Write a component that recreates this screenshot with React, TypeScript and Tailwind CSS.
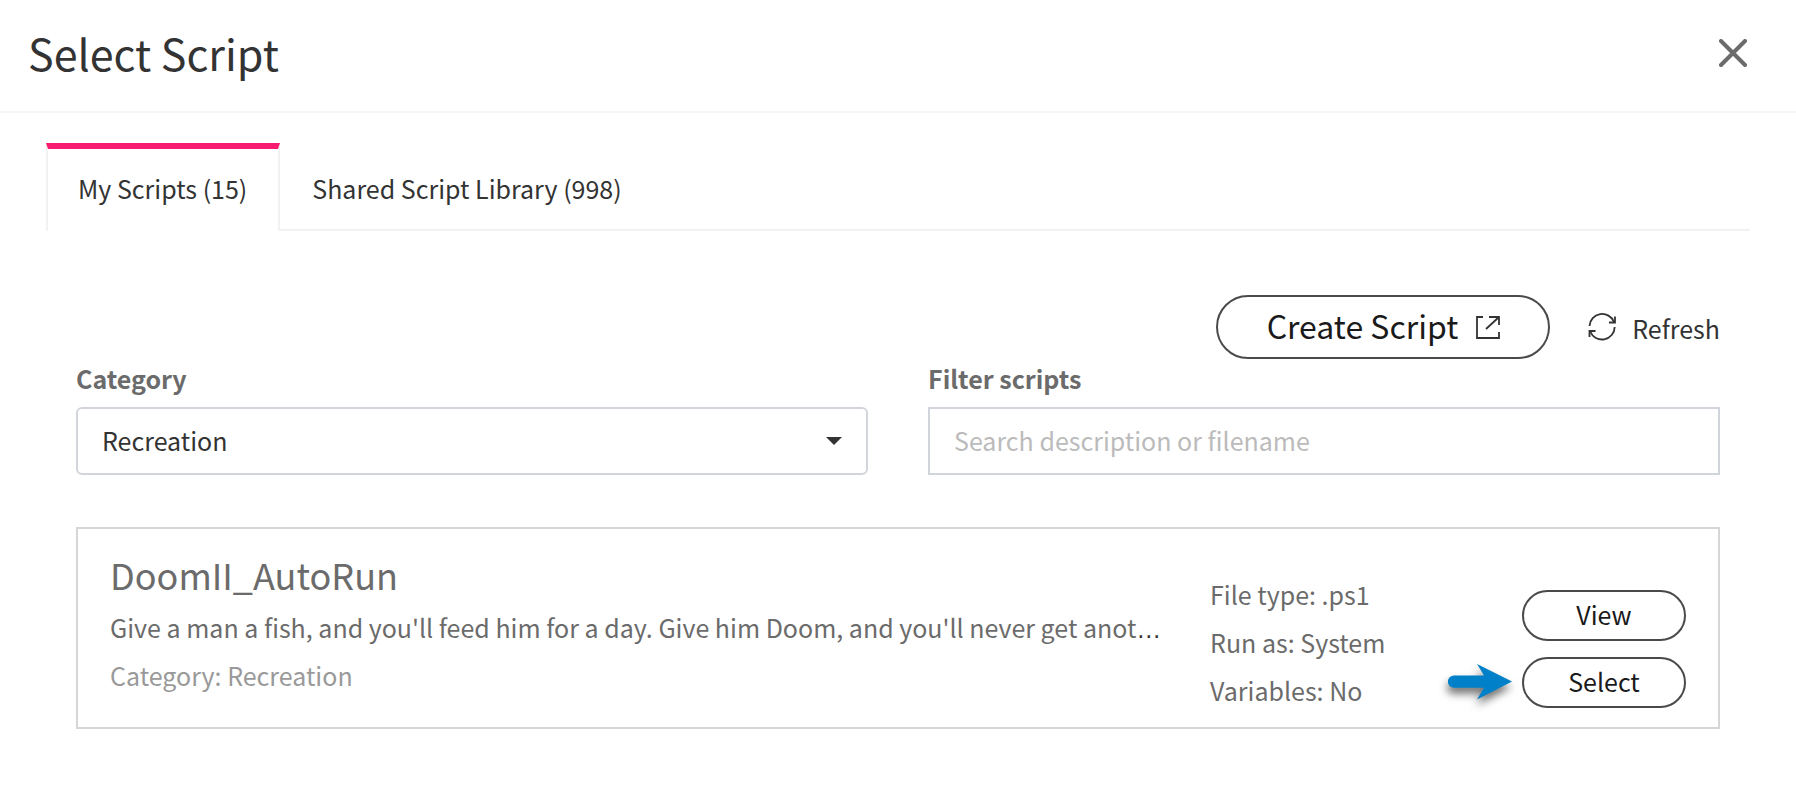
import React, { useState } from 'react';

type Script = {
  id: string;
  name: string;
  summary: string;
  category: string;
  fileType: string;
  runAs: string;
  variables: string;
};

type TabId = 'mine' | 'shared';

const tabs: { id: TabId; label: string }[] = [
  { id: 'mine', label: 'My Scripts (15)' },
  { id: 'shared', label: 'Shared Script Library (998)' }
];

// summary is already shortened, the card adds the ellipsis
const scripts: Script[] = [
  {
    id: 'doom2',
    name: 'DoomII_AutoRun',
    summary: "Give a man a fish, and you'll feed him for a day. Give him Doom, and you'll never get anot",
    category: 'Recreation',
    fileType: '.ps1',
    runAs: 'System',
    variables: 'No'
  }
];

function CloseIcon() {
  return (
    <svg width="28" height="28" viewBox="0 0 28 28" fill="none" stroke="#6b6b6b" strokeWidth="4" strokeLinecap="round">
      <path d="M2 2L26 26M26 2L2 26" />
    </svg>
  );
}

function ExternalIcon() {
  return (
    <svg width="24" height="24" viewBox="0 0 24 24" fill="none" stroke="#333333" strokeWidth="1.8">
      <path d="M7 2H1V23H23V17" />
      <path d="M13 2H23V10M23 2L10 14" />
    </svg>
  );
}

function RefreshIcon() {
  return (
    <svg width="28" height="28" viewBox="0 0 28 28" fill="none" stroke="#333333" strokeWidth="1.8">
      <path d="M1.500 13A12.700 12.700 0 0 1 26 9" />
      <path d="M27 3.500V9.500H21" />
      <path d="M26.700 14A12.700 12.700 0 0 1 2.200 18.500" />
      <path d="M1.500 24V18H7.500" />
    </svg>
  );
}

// Blue pointer next to the Select button
function PointerArrow() {
  return (
    <svg
      className="absolute right-full top-1/2 mr-0.5 -translate-y-1/2 pointer-events-none drop-shadow-[-1px_6px_4px_rgba(0,0,0,0.55)]"
      width="72"
      height="44"
      viewBox="0 0 72 44"
      aria-hidden="true"
    >
      <path d="M6 14.500H36L29 3L64 20.500L29 38.500L36 26.700H6A6 6 0 0 1 6 14.500Z" fill="#0080c8" />
    </svg>
  );
}

function ScriptCard({ script }: { script: Script }) {
  return (
    <article className="flex items-start border-2 border-[#d6d6d6] px-8 pb-[13px]">
      <div className="min-w-0 flex-1 pt-[22px]">
        <h2 className="mb-1.5 text-[36px] leading-[46px] text-[#6b6b6b]">{script.name}</h2>
        <p className="whitespace-nowrap leading-[48px] text-[#6b6b6b]">
          {script.summary}
          <span className="font-['Liberation_Sans',sans-serif] leading-none text-[#333333]">…</span>
        </p>
        <p className="leading-[48px] text-[#999999]">Category: {script.category}</p>
      </div>
      <div className="ml-[42px] w-[312px] shrink-0 pt-[41px] leading-[48px] text-[#6b6b6b]">
        <p>File type: {script.fileType}</p>
        <p>Run as: {script.runAs}</p>
        <p>Variables: {script.variables}</p>
      </div>
      <div className="flex w-[164px] shrink-0 flex-col gap-4 pt-[61px] text-[#1a1a1a]">
        <button className="h-[51px] rounded-full border-2 border-[#4a4a4a] pb-0.5">View</button>
        <div className="relative">
          <PointerArrow />
          <button className="h-[51px] w-full rounded-full border-2 border-[#4a4a4a] pb-0.5">Select</button>
        </div>
      </div>
    </article>
  );
}

export default function App() {
  const [tab, setTab] = useState<TabId>('mine');
  const [category, setCategory] = useState('Recreation');
  const [filter, setFilter] = useState('');

  const visible = scripts.filter(s => (s.name + s.summary).toLowerCase().includes(filter.toLowerCase()));

  return (
    <div className="min-h-screen bg-white font-['Noto_Sans_CJK_SC',sans-serif] text-[25px] text-[#333333]">
      <header className="flex items-center justify-between border-b-2 border-[#f4f4f4] pt-[21px] pr-[49px] pb-[27px] pl-7">
        <h1 className="text-[43px] leading-[63px]">Select Script</h1>
        <button aria-label="Close">
          <CloseIcon />
        </button>
      </header>

      <main className="px-[46px] pt-[30px]">
        <div role="tablist" className="flex">
          {tabs.map(t => (
            <button
              key={t.id}
              role="tab"
              aria-selected={tab === t.id}
              onClick={() => setTab(t.id)}
              className={
                tab === t.id
                  ? 'h-[88px] border-x-2 border-t-[6px] border-x-[#f2f2f2] border-t-[#f81c70] pr-[31px] pb-0.5 pl-[30px]'
                  : 'h-[88px] border-t-[6px] border-b-2 border-t-transparent border-b-[#f2f2f2] px-8'
              }
            >
              {t.label}
            </button>
          ))}
          <div className="flex-1 border-b-2 border-[#f2f2f2]" />
        </div>

        <div className="px-[30px] pt-16">
          <div className="flex items-center justify-end">
            <button className="flex h-16 items-center gap-[18px] rounded-full border-2 border-[#4a4a4a] pr-12 pl-[49px] text-[32px] text-[#1a1a1a]">
              <span className="pb-1">Create Script</span>
              <ExternalIcon />
            </button>
            <button className="ml-[38px] flex items-center gap-4">
              <RefreshIcon />
              <span className="pt-1">Refresh</span>
            </button>
          </div>

          <div className="grid grid-cols-2 gap-[60px]">
            <div>
              <label htmlFor="category" className="mb-[10px] block font-bold leading-[38px] text-[#6b6b6b]">Category</label>
              <div className="relative">
                <select
                  id="category"
                  className="h-[68px] w-full appearance-none rounded-md border-2 border-[#d2d4dc] bg-white px-6"
                  value={category}
                  onChange={e => setCategory(e.target.value)}
                >
                  <option>Recreation</option>
                </select>
                <svg className="absolute right-[26px] top-[30px] pointer-events-none" width="16" height="8" viewBox="0 0 16 8">
                  <path d="M0 0H16L8 8Z" fill="#333333" />
                </svg>
              </div>
            </div>
            <div>
              <label htmlFor="filter" className="mb-[10px] block font-bold leading-[38px] text-[#6b6b6b]">Filter scripts</label>
              <input
                id="filter"
                className="h-[68px] w-full border-2 border-[#d2d4dc] px-6 pb-0.5 placeholder:text-[#bbbbbb]"
                placeholder="Search description or filename"
                value={filter}
                onChange={e => setFilter(e.target.value)}
              />
            </div>
          </div>

          <div className="mt-[52px] flex flex-col gap-6">
            {visible.map(s => (
              <ScriptCard key={s.id} script={s} />
            ))}
          </div>
        </div>
      </main>
    </div>
  );
}
